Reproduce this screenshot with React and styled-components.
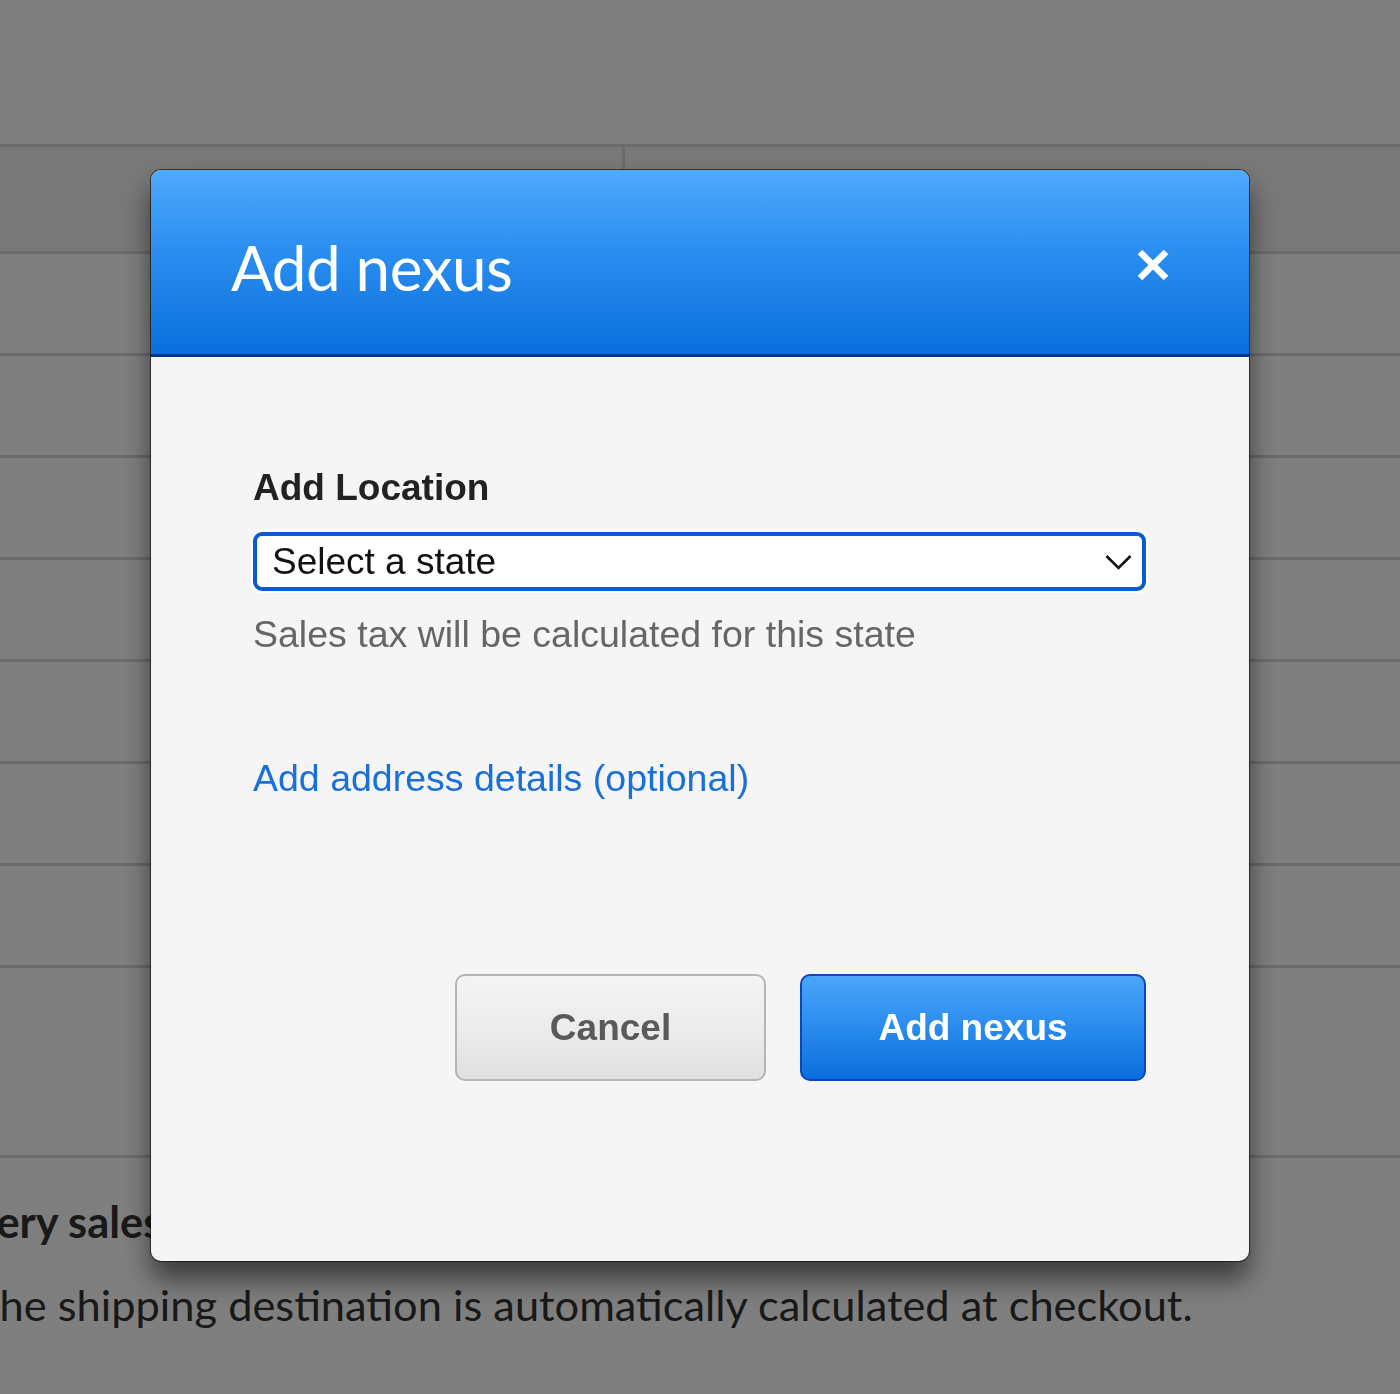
import React from "react";
import styled, { createGlobalStyle } from "styled-components";

const GlobalStyle = createGlobalStyle`
  html, body { margin: 0; padding: 0; background: #ffffff; }
  body { font-family: "Liberation Sans", Arial, sans-serif; overflow: hidden; }
  * { box-sizing: border-box; }
`;

const Page = styled.div`
  width: 1400px;
  height: 1394px;
  padding-top: 144px;
  background: #ffffff;
  overflow: hidden;
`;

const Table = styled.div`
  display: flex;
  flex-direction: column;
  border-top: 3px solid #d6d6d6;
`;

const HeaderRow = styled.div`
  display: grid;
  grid-template-columns: 625px 1fr;
  height: 107px;
  background: #f0f0f0;
  border-bottom: 3px solid #d6d6d6;
`;

const HeaderCell = styled.div`
  border-right: ${(p) => (p.$divider ? "3px solid #d6d6d6" : "none")};
`;

const Row = styled.div`
  height: ${(p) => p.$h || 102}px;
  border-bottom: 3px solid #d6d6d6;
`;

const Footnote = styled.div`
  margin-left: -16px;
  padding-top: 22px;
  font-family: Lato, "Open Sans", sans-serif;
  color: #333333;
  font-size: 43.4px;
  line-height: 83px;
  white-space: nowrap;
`;

const FootTitle = styled.div`
  font-weight: 700;
  text-indent: -34px;
`;

const FootText = styled.div`
  font-weight: 400;
`;

const Overlay = styled.div`
  position: fixed;
  inset: 0;
  background: rgba(0, 0, 0, 0.5);
  display: flex;
  flex-direction: column;
  align-items: center;
  padding-top: 170px;
`;

const Modal = styled.div`
  width: 1098px;
  height: 1091px;
  border-radius: 10px;
  background: #f5f5f5;
  display: flex;
  flex-direction: column;
  overflow: hidden;
  box-shadow: 0 0 0 1px rgba(0, 0, 0, 0.55), 0 18px 28px rgba(0, 0, 0, 0.55);
`;

const Header = styled.div`
  height: 187px;
  flex-shrink: 0;
  display: flex;
  align-items: center;
  justify-content: space-between;
  padding: 0 79px 0 80px;
  background: linear-gradient(to bottom, #4faafc 0%, #2a8df0 45%, #0a6fdc 100%);
  border-bottom: 3px solid #00358f;
`;

const Title = styled.h2`
  margin: 0;
  padding-top: 10px;
  font-family: Lato, "Open Sans", sans-serif;
  font-weight: 400;
  font-size: 62px;
  color: #ffffff;
  letter-spacing: -0.5px;
`;

const CloseButton = styled.button`
  width: 34px;
  height: 34px;
  margin-top: 6px;
  padding: 0;
  border: 0;
  background: transparent;
  display: flex;
  align-items: center;
  justify-content: center;
  cursor: pointer;
`;

const Body = styled.div`
  flex: 1;
  display: flex;
  flex-direction: column;
  padding: 109px 103px 0 102px;
`;

const Label = styled.div`
  font-weight: 700;
  font-size: 37px;
  line-height: 44px;
  color: #222222;
`;

const SelectBox = styled.div`
  margin-top: 22px;
  height: 59px;
  display: flex;
  align-items: center;
  justify-content: space-between;
  padding: 0 10px 0 15px;
  background: #ffffff;
  border: 4px solid #0a5ad2;
  border-radius: 9px;
  box-shadow: 0 0 0 2px #ffffff;
  font-size: 37px;
  color: #111111;
`;

const Helper = styled.div`
  margin-top: 21px;
  font-size: 37.5px;
  line-height: 44px;
  color: #666666;
`;

const LinkText = styled.a`
  margin-top: 100px;
  align-self: flex-start;
  font-size: 37.5px;
  line-height: 44px;
  color: #1a6fd8;
  text-decoration: none;
  cursor: pointer;
`;

const Actions = styled.div`
  margin-top: 174px;
  display: flex;
  justify-content: flex-end;
  gap: 34px;
`;

const Button = styled.button`
  width: ${(p) => p.$w}px;
  height: 107px;
  border-radius: 10px;
  font-family: "Liberation Sans", Arial, sans-serif;
  font-weight: 700;
  font-size: 37px;
  cursor: pointer;
  border: 2px solid ${(p) => (p.$primary ? "#0a47b8" : "#b5b5b5")};
  color: ${(p) => (p.$primary ? "#ffffff" : "#5a5a5a")};
  background: ${(p) =>
    p.$primary
      ? "linear-gradient(to bottom, #4ba5fa 0%, #2d8ef0 45%, #0a6ddb 100%)"
      : "linear-gradient(to bottom, #f4f4f4 0%, #ececec 50%, #e0e0e0 100%)"};
`;

export default function App() {
  const rows = [1, 2, 3, 4, 5, 6, 7];
  return (
    <>
      <GlobalStyle />
      <Page>
        <Table>
          <HeaderRow>
            <HeaderCell $divider />
            <HeaderCell />
          </HeaderRow>
          {rows.map((r) => (
            <Row key={r} />
          ))}
          <Row $h={190} />
        </Table>
        <Footnote>
          <FootTitle>Every sales</FootTitle>
          <FootText>the shipping destination is automatically calculated at checkout.</FootText>
        </Footnote>
      </Page>
      <Overlay>
        <Modal>
          <Header>
            <Title>Add nexus</Title>
            <CloseButton aria-label="Close">
              <svg width="34" height="34" viewBox="0 0 34 34">
                <path d="M4 4 L30 30 M30 4 L4 30" stroke="#ffffff" strokeWidth="6.5" strokeLinecap="butt" />
              </svg>
            </CloseButton>
          </Header>
          <Body>
            <Label>Add Location</Label>
            <SelectBox>
              <span>Select a state</span>
              <svg width="27" height="16" viewBox="0 0 27 16">
                <polyline points="1.5,2 13.5,14 25.5,2" fill="none" stroke="#111111" strokeWidth="2.6" />
              </svg>
            </SelectBox>
            <Helper>Sales tax will be calculated for this state</Helper>
            <LinkText>Add address details (optional)</LinkText>
            <Actions>
              <Button $w={311}>Cancel</Button>
              <Button $w={346} $primary>Add nexus</Button>
            </Actions>
          </Body>
        </Modal>
      </Overlay>
    </>
  );
}
